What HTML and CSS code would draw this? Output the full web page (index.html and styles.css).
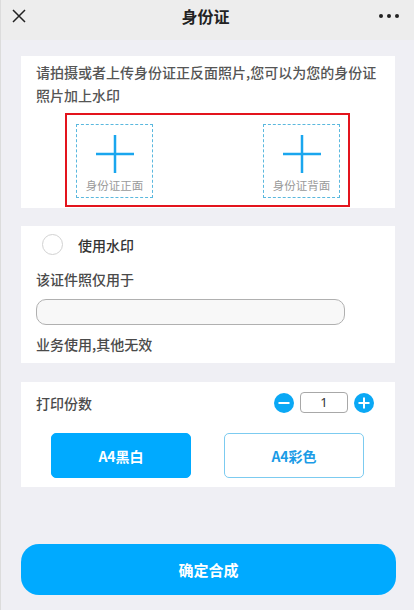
FILE: index.html
```html
<!DOCTYPE html>
<html lang="zh">
<head>
<meta charset="utf-8">
<link rel="stylesheet" href="styles.css">
</head>
<body>
<div class="page">
  <header class="nav">
    <svg class="nav-close" width="14" height="14" viewBox="0 0 14 14"><path d="M1 1L13 13M13 1L1 13" stroke="#222" stroke-width="1.5" fill="none"/></svg>
    <div class="nav-title">身份证</div>
    <div class="nav-more"><span></span><span></span><span></span></div>
  </header>

  <main class="content">
    <section class="card card-upload">
      <p class="intro">请拍摄或者上传身份证正反面照片,您可以为您的身份证照片加上水印</p>
      <div class="highlight">
        <div class="upload">
          <svg class="plus" width="38" height="38" viewBox="0 0 38 38"><path d="M19 0V38M0 19H38" stroke="#1aa6ee" stroke-width="2.5"/></svg>
          <span class="upload-label">身份证正面</span>
        </div>
        <div class="upload">
          <svg class="plus" width="38" height="38" viewBox="0 0 38 38"><path d="M19 0V38M0 19H38" stroke="#1aa6ee" stroke-width="2.5"/></svg>
          <span class="upload-label">身份证背面</span>
        </div>
      </div>
    </section>

    <section class="card card-mark">
      <div class="radio-row">
        <span class="radio"></span>
        <span class="radio-text">使用水印</span>
      </div>
      <div class="line line-first">该证件照仅用于</div>
      <div class="mark-input"></div>
      <div class="line line-last">业务使用,其他无效</div>
    </section>

    <section class="card card-print">
      <div class="print-row">
        <span class="line">打印份数</span>
        <div class="stepper">
          <span class="step-btn"><svg width="20" height="20" viewBox="0 0 20 20"><circle cx="10" cy="10" r="10" fill="#0aa8f5"/><path d="M4.5 10H15.5" stroke="#fff" stroke-width="2"/></svg></span>
          <span class="count">1</span>
          <span class="step-btn"><svg width="20" height="20" viewBox="0 0 20 20"><circle cx="10" cy="10" r="10" fill="#0aa8f5"/><path d="M4.5 10H15.5M10 4.5V15.5" stroke="#fff" stroke-width="2"/></svg></span>
        </div>
      </div>
      <div class="mode-row">
        <button class="mode mode-active">A4黑白</button>
        <button class="mode">A4彩色</button>
      </div>
    </section>

    <button class="submit">确定合成</button>
  </main>
</div>
</body>
</html>
```

FILE: styles.css
```css
* { box-sizing: border-box; }
html, body { margin: 0; padding: 0; }
body {
  width: 414px;
  height: 610px;
  overflow: hidden;
  background: #efeff4;
  font-family: "Noto Sans CJK SC", "Noto Sans", sans-serif;
  color: #4a4a4a;
}
.page {
  height: 610px;
  border-left: 1px solid #dcdcdc;
}
.nav {
  height: 40px;
  background: #ededed;
  display: flex;
  align-items: center;
  justify-content: space-between;
  padding: 0 15px 0 11px;
}
.nav-close { display: block; margin-bottom: 8px; }
.nav-title {
  font-size: 16px;
  font-weight: bold;
  color: #222;
  margin-bottom: 8px;
  margin-left: 6px;
}
.nav-more { display: flex; gap: 4px; margin-bottom: 8px; }
.nav-more span { width: 4px; height: 4px; border-radius: 50%; background: #222; }

.content {
  padding: 16px 18px 0 20px;
  display: flex;
  flex-direction: column;
}
.card {
  background: #fff;
  width: 374px;
}
.card-upload { padding: 5px 15px 1px; }
.intro {
  margin: 0;
  font-size: 14px;
  line-height: 23px;
  font-weight: 500;
  color: #555;
}
.highlight {
  margin: 6px 0 0 29px;
  width: 285px;
  border: 2px solid #e3141d;
  padding: 9px 8px 7px 9px;
  display: flex;
  justify-content: space-between;
}
.upload {
  width: 77px;
  height: 74px;
  border: 1px dashed #5ab8de;
  display: flex;
  flex-direction: column;
  align-items: center;
  padding-top: 10px;
}
.plus { display: block; }
.upload-label {
  margin-top: 5px;
  font-size: 11.5px;
  line-height: 14px;
  color: #9a9a9a;
}

.card-mark {
  margin-top: 18px;
  padding: 8px 15px 9px;
}
.radio-row {
  display: flex;
  align-items: center;
  height: 21px;
}
.radio {
  width: 21px;
  height: 21px;
  border-radius: 50%;
  border: 1px solid #d2d2d2;
  margin-left: 6px;
}
.radio-text {
  margin-left: 15px;
  font-size: 14px;
  color: #333;
  font-weight: 500;
}
.line {
  font-size: 14px;
  line-height: 20px;
  color: #4a4a4a;
  font-weight: 500;
}
.line-first { margin-top: 14px; }
.mark-input {
  margin-top: 10px;
  width: 309px;
  height: 26px;
  border: 1px solid #b0b0b0;
  border-radius: 10px;
  background: #f8f8f8;
}
.line-last { margin-top: 9px; }

.card-print {
  margin-top: 19px;
  padding: 10px 21px 9px 15px;
}
.print-row {
  display: flex;
  justify-content: space-between;
  align-items: center;
}
.stepper {
  display: flex;
  align-items: center;
  gap: 6px;
}
.step-btn svg { display: block; }
.count {
  width: 48px;
  height: 21px;
  border: 1px solid #a8a8a8;
  border-radius: 4px;
  text-align: center;
  font-size: 13px;
  line-height: 19px;
  color: #333;
  font-family: "Noto Sans", sans-serif;
}
.mode-row {
  margin-top: 20px;
  padding-left: 15px;
  display: flex;
  gap: 33px;
}
.mode {
  width: 140px;
  height: 45px;
  border-radius: 5px;
  border: 1px solid #7ccbf0;
  background: #fff;
  color: #1a9be6;
  font-family: "Noto Sans CJK SC", "Noto Sans", sans-serif;
  font-size: 14px;
  font-weight: bold;
  padding: 0;
}
.mode-active {
  background: #00aaff;
  border-color: #00aaff;
  color: #fff;
}

.submit {
  margin-top: 57px;
  width: 375px;
  height: 51px;
  border: none;
  border-radius: 18px;
  background: #00aaff;
  color: #fff;
  font-family: "Noto Sans CJK SC", "Noto Sans", sans-serif;
  font-size: 15px;
  font-weight: bold;
  padding: 0;
}
```
